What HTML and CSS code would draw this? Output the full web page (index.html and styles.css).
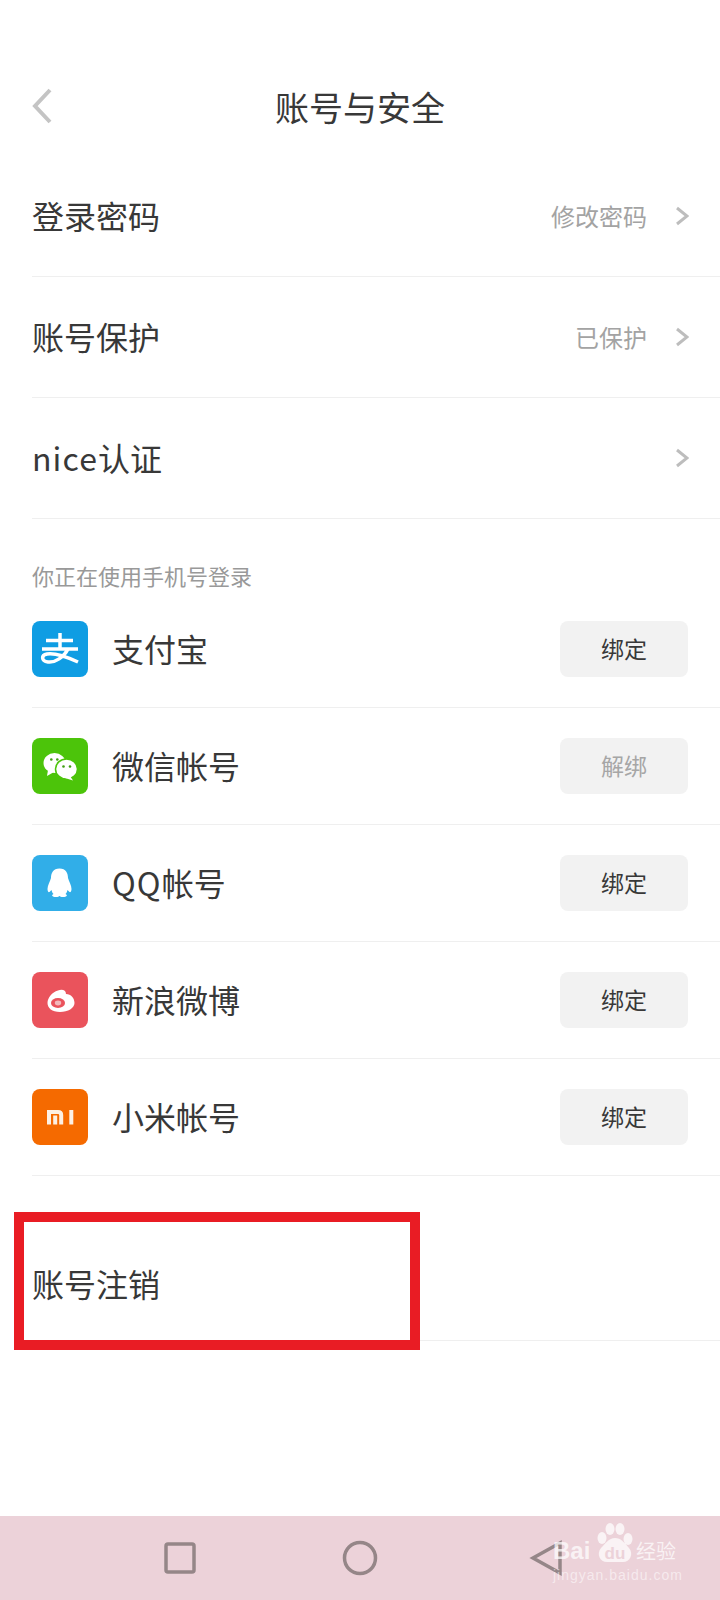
FILE: index.html
```html
<!DOCTYPE html>
<html>
<head>
    <meta charset="utf-8">
    <title>账号与安全</title>
    <link rel="stylesheet" href="styles.css">
</head>
<body>
<div class="page">
    <div class="header">
        <svg class="back" width="20" height="36" viewBox="0 0 20 36"><path d="M18 2 L3 18 L18 34"/></svg>
        <div class="title">账号与安全</div>
    </div>

    <div class="row">
        <span class="rowName">登录密码</span>
        <span class="rowValue">修改密码</span>
        <svg class="arrow" width="14" height="20" viewBox="0 0 14 20"><path d="M2 2 L12 10 L2 18"/></svg>
    </div>
    <div class="row">
        <span class="rowName">账号保护</span>
        <span class="rowValue">已保护</span>
        <svg class="arrow" width="14" height="20" viewBox="0 0 14 20"><path d="M2 2 L12 10 L2 18"/></svg>
    </div>
    <div class="row">
        <span class="rowName"><span class="latin">nice</span>认证</span>
        <svg class="arrow" width="14" height="20" viewBox="0 0 14 20"><path d="M2 2 L12 10 L2 18"/></svg>
    </div>

    <div class="sectionLabel">你正在使用手机号登录</div>

    <div class="bindRow">
        <svg class="appIcon" width="56" height="56" viewBox="0 0 56 56">
            <rect width="56" height="56" rx="8" fill="#0f9de3"/>
            <path d="M14 19.500 H41 M28 12 V28 M10 28 H46" fill="none" stroke="#fff" stroke-width="3.500"/>
            <path d="M36 28 C32 36 23 42 16 41 C9 40 9 34 15 33 C24 31.500 35 36 46 41" fill="none" stroke="#fff" stroke-width="3.500"/>
        </svg>
        <span class="bindName">支付宝</span>
        <button class="bindBtn">绑定</button>
    </div>
    <div class="bindRow">
        <svg class="appIcon" width="56" height="56" viewBox="0 0 56 56">
            <rect width="56" height="56" rx="8" fill="#4cc40a"/>
            <ellipse cx="22.500" cy="25" rx="11" ry="10" fill="#fff"/>
            <path d="M16 32 L15 38 L22 34 Z" fill="#fff"/>
            <ellipse cx="34.500" cy="31" rx="11" ry="10" fill="#fff" stroke="#4cc40a" stroke-width="1.500"/>
            <path d="M38 38 L41 42.500 L33 40 Z" fill="#fff"/>
            <circle cx="19.300" cy="21.500" r="1.300" fill="#3f9e10"/>
            <circle cx="25.300" cy="21.500" r="1.300" fill="#3f9e10"/>
            <circle cx="31.500" cy="28.500" r="1.300" fill="#3f9e10"/>
            <circle cx="38" cy="28.500" r="1.300" fill="#3f9e10"/>
        </svg>
        <span class="bindName">微信帐号</span>
        <button class="bindBtn off">解绑</button>
    </div>
    <div class="bindRow">
        <svg class="appIcon" width="56" height="56" viewBox="0 0 56 56">
            <rect width="56" height="56" rx="8" fill="#31aee8"/>
            <path d="M27.500 13.500 C21 13.500 19 18.500 19 23 C18 27 15.500 30 15.500 34 C15.500 36.500 16.500 37.500 17.500 37 L19.500 35 C20 37 20.500 38 21.500 39 C19 40 20 42 24 42 C26 42 27 41.500 27.500 41 C28 41.500 29 42 31 42 C35 42 36 40 33.500 39 C34.500 38 35 37 35.500 35 L37.500 37 C38.500 37.500 39.500 36.500 39.500 34 C39.500 30 37 27 36 23 C36 18.500 34 13.500 27.500 13.500 Z" fill="#fff"/>
        </svg>
        <span class="bindName"><span class="latin">QQ</span>帐号</span>
        <button class="bindBtn">绑定</button>
    </div>
    <div class="bindRow">
        <svg class="appIcon" width="56" height="56" viewBox="0 0 56 56">
            <rect width="56" height="56" rx="8" fill="#ea535c"/>
            <path d="M15.500 31 C15.500 26 20 20 26 18.500 C30 17 34 18 34 22 C39 22 42.500 26 42.500 31 C42.500 36 36 40 28 40 C20 40 15.500 36 15.500 31 Z" fill="#fff"/>
            <ellipse cx="26" cy="31" rx="7" ry="5" fill="#ea535c"/>
            <ellipse cx="26" cy="31" rx="3.200" ry="2.400" fill="#f3b8bb"/>
        </svg>
        <span class="bindName">新浪微博</span>
        <button class="bindBtn">绑定</button>
    </div>
    <div class="bindRow">
        <svg class="appIcon" width="56" height="56" viewBox="0 0 56 56">
            <rect width="56" height="56" rx="8" fill="#f56a00"/>
            <path d="M17 35.500 V23 H26 C28 23 29.200 24 29.200 26 V35.500 M23.200 35.500 V26.500 M39.300 21 V35.500" fill="none" stroke="#fdf0e4" stroke-width="4"/>
        </svg>
        <span class="bindName">小米帐号</span>
        <button class="bindBtn">绑定</button>
    </div>

    <div class="row cancelRow">
        <span class="rowName">账号注销</span>
        <div class="redBox"></div>
    </div>

    <div class="navBar">
        <svg class="navIcon" width="36" height="36" viewBox="0 0 36 36"><rect x="4" y="4" width="28" height="28" rx="2"/></svg>
        <svg class="navIcon" width="36" height="36" viewBox="0 0 36 36"><circle cx="18" cy="18" r="15.500"/></svg>
        <svg class="navIcon navBack" width="36" height="36" viewBox="0 0 36 36"><path d="M33 3 L6 18 L33 33 Z"/></svg>
        <div class="mark">
            <div class="markLine">
                <span class="markBai">Bai</span>
                <svg class="markPaw" width="37" height="40" viewBox="0 0 37 40">
                    <ellipse cx="5" cy="15" rx="4.500" ry="6"/>
                    <ellipse cx="13" cy="6" rx="4.500" ry="6"/>
                    <ellipse cx="23" cy="6" rx="4.500" ry="6"/>
                    <ellipse cx="31" cy="16" rx="4.500" ry="6"/>
                    <path d="M18 15 C24 15 28 20 32 25 C37 31 33 39 26 39 H10 C3 39 -1 31 4 25 C8 21 12 15 18 15 Z"/>
                    <text x="18" y="36" text-anchor="middle">du</text>
                </svg>
                <span class="markWord">经验</span>
            </div>
            <div class="markUrl">jingyan.baidu.com</div>
        </div>
    </div>
</div>
</body>
</html>
```

FILE: styles.css
```css
* {
    box-sizing: border-box;
}

body {
    margin: 0;
    background-color: #fff;
    color: #383838;
    font-family: "Noto Sans CJK SC", "Noto Sans", sans-serif;
}

.page {
    position: relative;
    width: 720px;
    height: 1600px;
    display: flex;
    flex-direction: column;
}

.header {
    position: relative;
    height: 156px;
    padding-top: 82px;
}

.back {
    position: absolute;
    left: 32px;
    top: 88px;
}

.back path {
    fill: none;
    stroke: #c4c4c4;
    stroke-width: 4;
}

.title {
    text-align: center;
    font-size: 34px;
    line-height: 50px;
}

.row {
    position: relative;
    height: 121px;
    margin-left: 32px;
    padding-right: 31px;
    padding-bottom: 2px;
    display: flex;
    align-items: center;
    border-bottom: 1px solid #efefef;
}

.rowName {
    flex: 1;
    font-size: 32px;
}

.latin {
    letter-spacing: 1.100px;
}

.rowValue {
    font-size: 24px;
    color: #a3a3a3;
    margin-right: 28px;
}

.arrow {
    margin-top: 2px;
}

.arrow path {
    fill: none;
    stroke: #bdbdbd;
    stroke-width: 3;
}

.sectionLabel {
    margin: 42px 0 0 32px;
    height: 30px;
    font-size: 22px;
    line-height: 28px;
    color: #999;
}

.bindRow {
    height: 117px;
    margin-left: 32px;
    padding-right: 32px;
    display: flex;
    align-items: center;
    border-bottom: 1px solid #efefef;
}

.appIcon {
    flex: none;
    margin-right: 24px;
}

.bindName {
    flex: 1;
    font-size: 32px;
    padding-bottom: 2px;
}

.bindBtn {
    width: 128px;
    height: 56px;
    border: none;
    border-radius: 8px;
    padding: 0 0 2px;
    background-color: #f2f2f2;
    color: #383838;
    font-family: inherit;
    font-size: 23px;
}

.off {
    color: #a6a6a6;
}

.cancelRow {
    height: 165px;
    padding-top: 50px;
    padding-bottom: 0;
}

.redBox {
    position: absolute;
    left: -18px;
    top: 36px;
    width: 406px;
    height: 138px;
    border: 10px solid #e91c24;
}

.navBar {
    position: relative;
    margin-top: auto;
    height: 84px;
    background-color: #ecd2d9;
    display: flex;
    align-items: center;
    padding-left: 162px;
    gap: 144px;
}

.navIcon * {
    fill: none;
    stroke: #958688;
    stroke-width: 3.500;
}

.navBack {
    margin-left: 5px;
}

.mark {
    position: absolute;
    left: 553px;
    top: 7px;
    width: 130px;
    color: rgba(255, 255, 255, 0.72);
}

.markLine {
    display: flex;
    align-items: flex-end;
    height: 40px;
}

.markBai {
    width: 44px;
    margin-bottom: 1px;
    font-family: "Liberation Sans", sans-serif;
    font-weight: bold;
    font-size: 24px;
    line-height: 22px;
}

.markPaw {
    flex: none;
    overflow: visible;
    fill: rgba(255, 255, 255, 0.72);
}

.markPaw text {
    font-family: "Liberation Sans", sans-serif;
    font-weight: bold;
    font-size: 17px;
    fill: #ecd2d9;
}

.markWord {
    flex: none;
    margin-left: 2px;
    margin-bottom: 1px;
    font-size: 20px;
    line-height: 22px;
}

.markUrl {
    margin-top: 3px;
    font-family: "Liberation Sans", sans-serif;
    font-size: 14px;
    line-height: 18px;
    letter-spacing: 1px;
    white-space: nowrap;
    color: rgba(255, 255, 255, 0.55);
}
```
